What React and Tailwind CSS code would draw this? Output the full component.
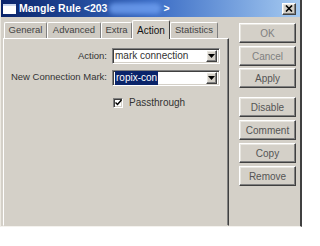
const raised =
  "border border-t-white border-l-white border-r-[#404040] border-b-[#404040] shadow-[inset_-1px_-1px_#808080,inset_1px_1px_#e8e6e0]";
const sunken =
  "border border-t-[#808080] border-l-[#808080] border-r-white border-b-white shadow-[inset_1px_1px_#404040,inset_-1px_-1px_#d4d0c8]";

const tabs = [
  { label: "General", w: "w-[43px]" },
  { label: "Advanced", w: "w-[54px]" },
  { label: "Extra", w: "w-[31px]" },
  { label: "Action", w: "w-[38px]", active: true },
  { label: "Statistics", w: "w-[48px]" },
];

const buttons = [
  { label: "OK", mt: "", dim: true },
  { label: "Cancel", mt: "mt-[3px]", dim: true },
  { label: "Apply", mt: "mt-[2px]" },
  { label: "Disable", mt: "mt-[9px]" },
  { label: "Comment", mt: "mt-[3px]" },
  { label: "Copy", mt: "mt-[3px]" },
  { label: "Remove", mt: "mt-[3px]" },
];

function Arrow() {
  return (
    <div className={`w-[11px] h-[12px] bg-[#d4d0c8] flex items-center justify-center ${raised}`}>
      <svg width="7" height="4" viewBox="0 0 7 4">
        <path d="M0 0h7L3.5 4z" fill="#000" />
      </svg>
    </div>
  );
}

function Combo({ children }) {
  return (
    <div className={`w-[108px] h-[16px] bg-white flex items-center pl-[2px] pr-[2px] ${sunken}`}>
      <div className="flex-1 flex items-center overflow-hidden">{children}</div>
      <Arrow />
    </div>
  );
}

export default function App() {
  return (
    <div className="w-[320px] h-[246px] bg-white overflow-hidden font-['Liberation_Sans',Arial,sans-serif] text-[10px] text-[#333]">
      <div className="w-[302px] h-[227px] bg-[#d4d0c8] flex flex-col border-l border-l-[#ece9e2] border-r-2 border-r-[#404040] border-b border-b-[#f4f2ee]">
        {/* title bar */}
        <div className="h-[17px] flex items-center bg-gradient-to-r from-[#0a246a] via-[#3a6bc4] to-[#a6caf0] pl-[2px] pr-[4px]">
          <div className="w-[13px] h-[10px] bg-white border-t-2 border-t-[#c8d4ec]" />
          <span className="ml-[3px] text-white font-bold text-[10.5px] leading-none">Mangle Rule &lt;203</span>
          <span className="ml-[2px] w-[52px] h-[11px] rounded-full bg-[#6f9ff0] blur-[2px] opacity-80" />
          <span className="ml-[2px] text-white font-bold text-[10.5px] leading-none">&gt;</span>
          <div className={`ml-auto w-[14px] h-[12px] bg-[#d4d0c8] flex items-center justify-center ${raised}`}>
            <svg width="8" height="7" viewBox="0 0 8 7">
              <path d="M1 0.5L7 6.5M7 0.5L1 6.5" stroke="#000" strokeWidth="1.6" />
            </svg>
          </div>
        </div>

        <div className="flex flex-1">
          {/* tabs + panel */}
          <div className="ml-[2px] w-[226px] flex flex-col pt-[1px]">
            <div className="flex items-end h-[20px] pl-[1px]">
              {tabs.map((t) =>
                t.active ? (
                  <div
                    key={t.label}
                    className={`${t.w} h-[19px] -mb-px z-10 relative bg-[#d4d0c8] flex items-center justify-center border-t border-l border-t-white border-l-white border-r border-r-[#404040] rounded-t-[2px] text-[10px] text-[#111]`}
                  >
                    {t.label}
                  </div>
                ) : (
                  <div
                    key={t.label}
                    className={`${t.w} h-[16px] bg-[#cfcbc3] flex items-center justify-center border-t border-l border-t-white border-l-white border-r border-r-[#808080] rounded-t-[2px] text-[9.5px] text-[#444]`}
                  >
                    {t.label}
                  </div>
                )
              )}
            </div>
            <div className="flex-1 border border-t-white border-l-white border-r-[#404040] border-b-[#d4d0c8] shadow-[inset_-1px_0_#808080] flex flex-col pt-[9px]">
              <div className="flex items-center h-[16px]">
                <div className="w-[104px] text-right pr-[1px] text-[9.5px]">Action:</div>
                <div className="ml-[4px]">
                  <Combo>
                    <span className="leading-none">mark connection</span>
                  </Combo>
                </div>
              </div>
              <div className="flex items-center h-[17px] mt-[5px]">
                <div className="w-[104px] text-right pr-[1px] text-[9.5px]">New Connection Mark:</div>
                <div className="ml-[4px]">
                  <Combo>
                    <span className="leading-none bg-[#0a246a] text-white px-[1px] py-[2px]">ropix-con</span>
                  </Combo>
                </div>
              </div>
              <div className="flex items-center mt-[9px] pl-[109px]">
                <div className={`w-[10px] h-[10px] bg-white flex items-center justify-center ${sunken}`}>
                  <svg width="7" height="7" viewBox="0 0 7 7">
                    <path d="M0.5 3.5L2.5 5.5L6.5 1" stroke="#000" strokeWidth="1.5" fill="none" />
                  </svg>
                </div>
                <span className="ml-[6px]">Passthrough</span>
              </div>
            </div>
          </div>

          {/* buttons */}
          <div className="ml-[10px] pt-[6px] flex flex-col">
            {buttons.map((b) => (
              <div
                key={b.label}
                className={`${b.mt} w-[57px] h-[20px] bg-[#d4d0c8] flex items-center justify-center ${raised} ${b.dim ? "text-[#808080]" : "text-[#555]"}`}
              >
                {b.label}
              </div>
            ))}
          </div>
        </div>
      </div>
    </div>
  );
}
